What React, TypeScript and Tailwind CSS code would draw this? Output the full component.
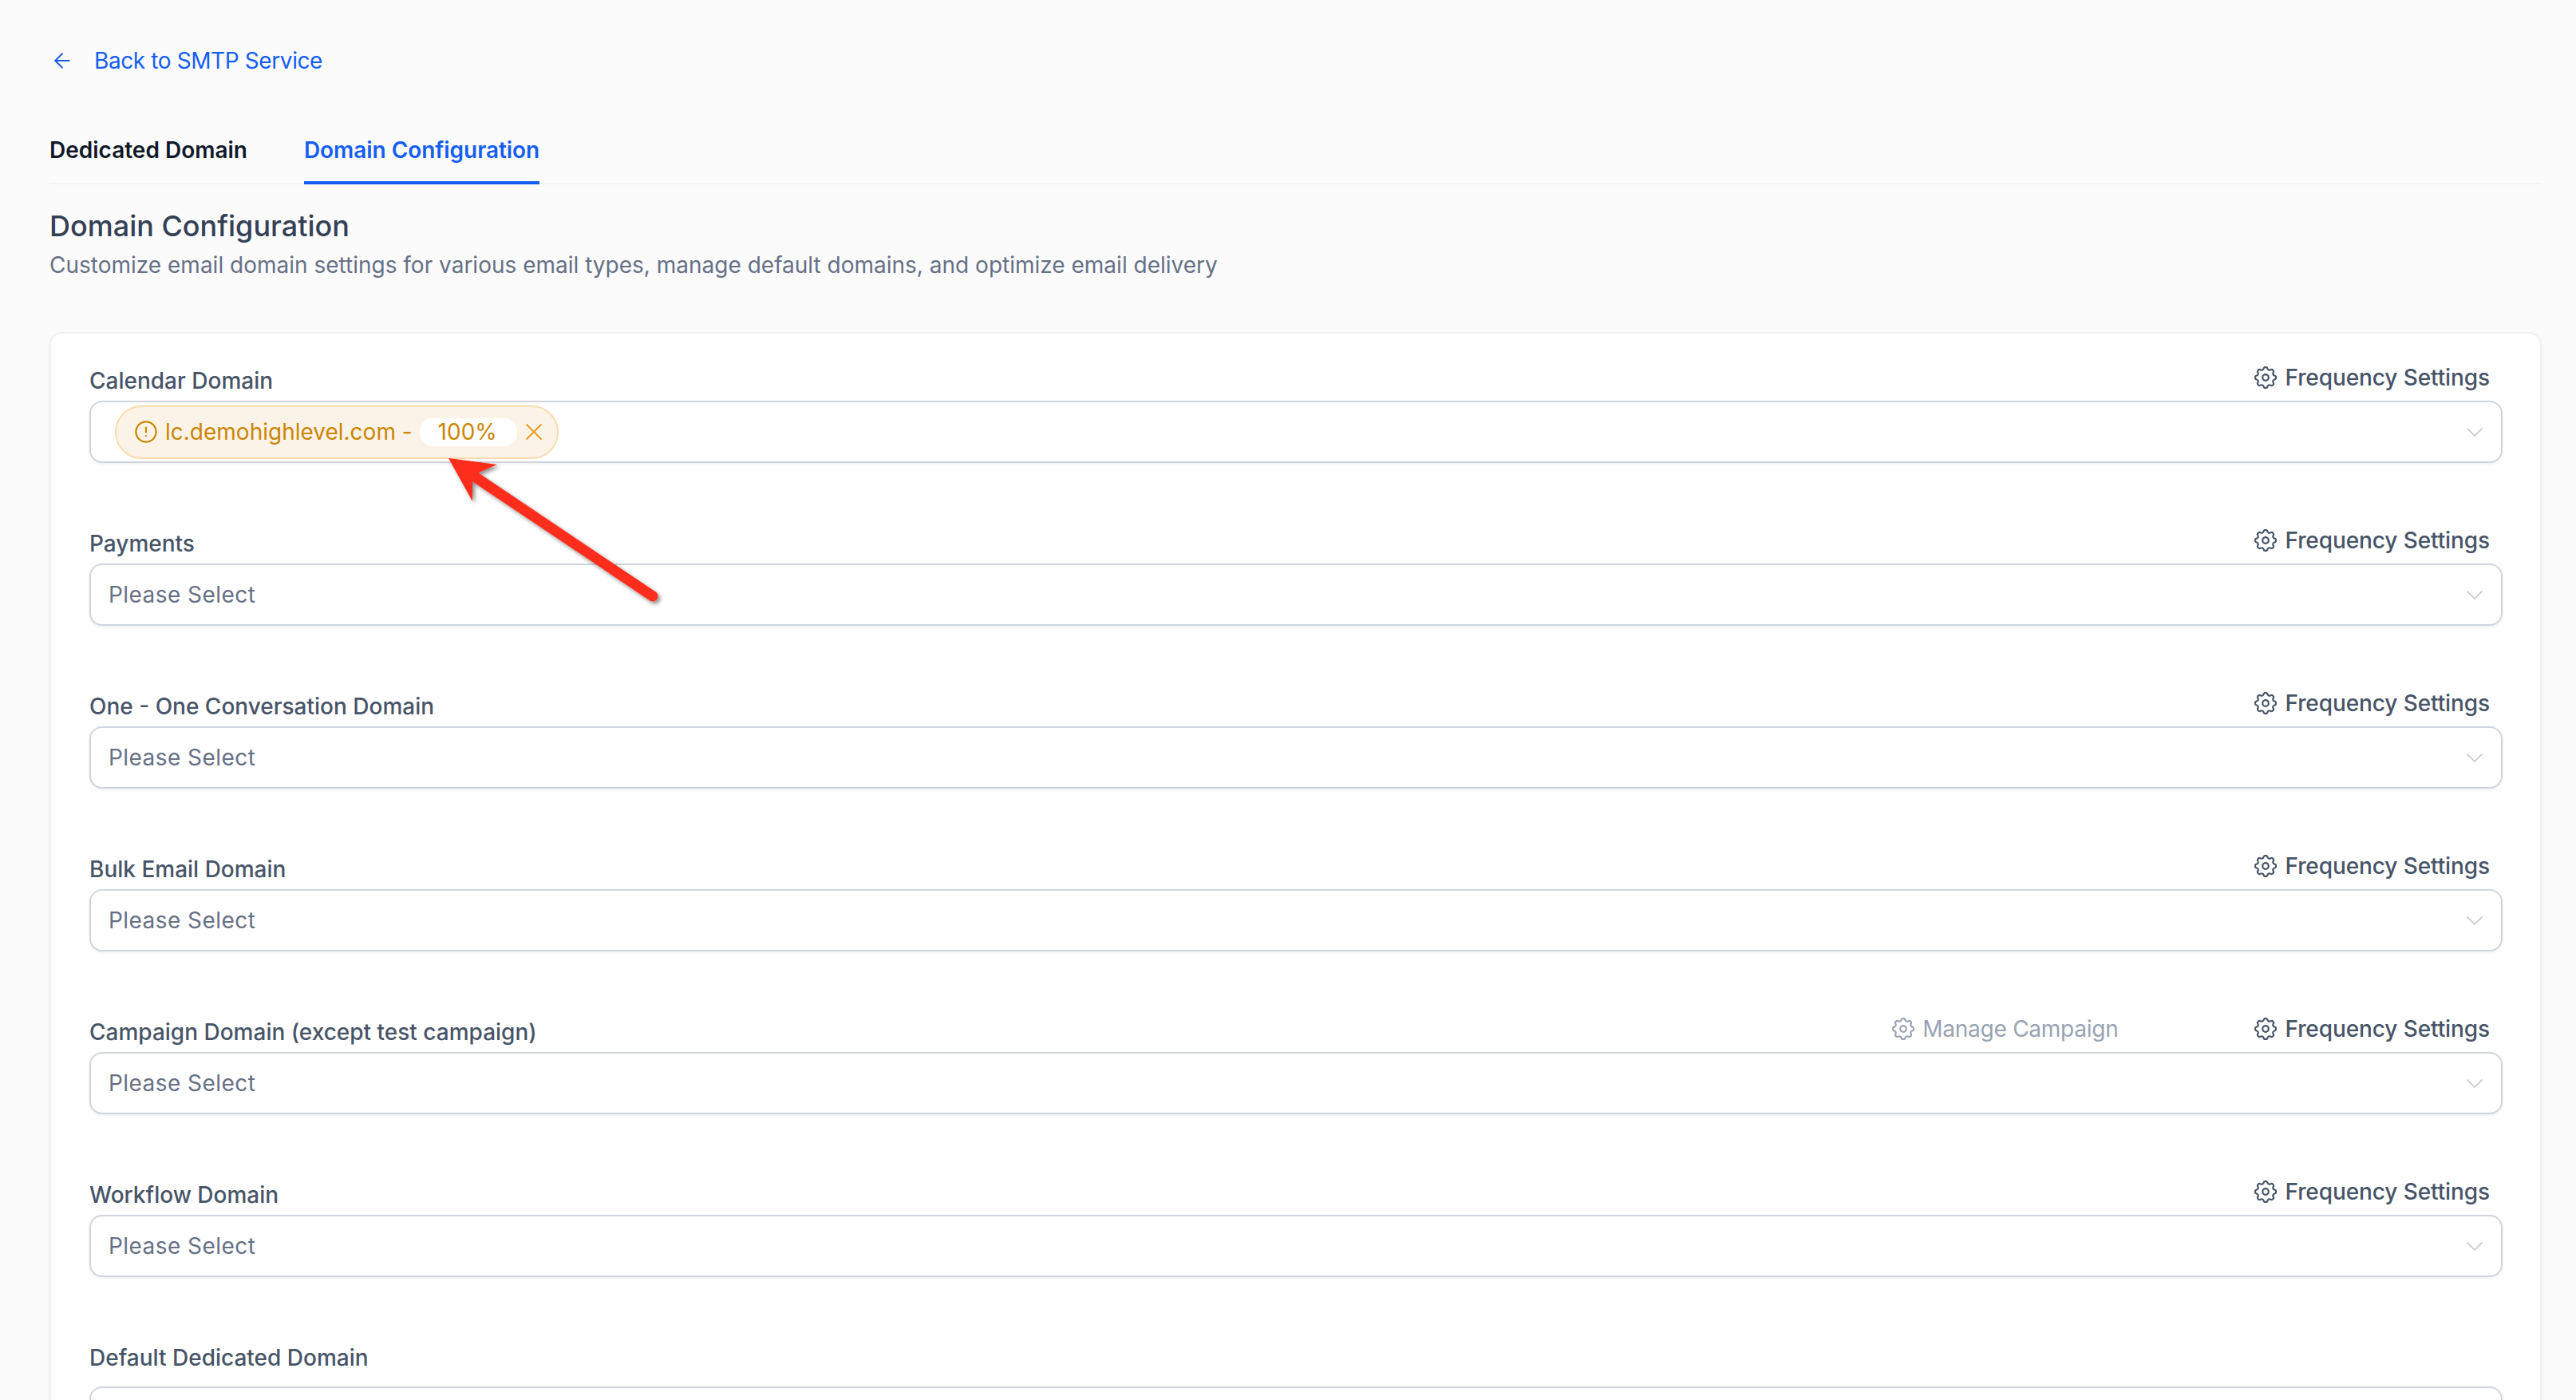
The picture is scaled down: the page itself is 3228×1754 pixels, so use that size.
import React from "react";
import { ArrowLeft, X } from "lucide-react";

function Gear({ className }: { className: string }) {
  return (
    <svg viewBox="2.4 2.4 19.2 19.2" className={className} fill="none" stroke="currentColor" strokeWidth="1.5" strokeLinecap="round" strokeLinejoin="round">
      <path d="M10.325 4.317c.426-1.756 2.924-1.756 3.35 0a1.724 1.724 0 002.573 1.066c1.543-.94 3.31.826 2.37 2.37a1.724 1.724 0 001.065 2.572c1.756.426 1.756 2.924 0 3.35a1.724 1.724 0 00-1.066 2.573c.94 1.543-.826 3.31-2.37 2.37a1.724 1.724 0 00-2.572 1.065c-.426 1.756-2.924 1.756-3.35 0a1.724 1.724 0 00-2.573-1.066c-1.543.94-3.31-.826-2.37-2.37a1.724 1.724 0 00-1.065-2.572c-1.756-.426-1.756-2.924 0-3.35a1.724 1.724 0 001.066-2.573c-.94-1.543.826-3.31 2.37-2.37.996.608 2.296.07 2.572-1.065z" />
      <circle cx="12" cy="12" r="2.6" />
    </svg>
  );
}

function Chevron() {
  return (
    <svg viewBox="0 0 20 11" className="h-[11px] w-[20px] shrink-0 text-[#c4c7cc]" fill="none" stroke="currentColor" strokeWidth="1.6">
      <path d="M0.6 0.6 L10 10 L19.4 0.6" />
    </svg>
  );
}

function Chip() {
  return (
    <div className="flex h-[67px] items-center rounded-full border-2 border-[#f9dbaf] bg-[#fcf3e8] pl-[23px] pr-[11px] text-[#ca8504]">
      <svg viewBox="0 0 28 28" className="h-[28px] w-[28px] shrink-0" fill="none" stroke="currentColor" strokeWidth="2.2" strokeLinecap="round">
        <circle cx="14" cy="14" r="12.6" />
        <path d="M14 8.5 V14.5" />
        <path d="M14 19 V19.2" />
      </svg>
      <span className="ml-[10px] whitespace-nowrap">lc.demohighlevel.com -</span>
      <span className="ml-[9px] flex h-[35px] w-[122px] items-center justify-center rounded-[16px] bg-white pr-[2px]">100%</span>
      <X className="ml-[3px] h-[36px] w-[36px] shrink-0 text-[#e89a1c]" strokeWidth={1.2} />
    </div>
  );
}

function Row({ label, chip, manage, plain }: { label: string; chip?: boolean; manage?: boolean; plain?: boolean }) {
  return (
    <div className="mb-[78px]">
      <div className={`flex items-end justify-between ${plain ? "h-[59px]" : "h-[48px]"}`}>
        <span className={`font-medium leading-[40px] text-[#475467] ${plain ? "pb-[16px]" : "pb-[5px]"}`}>{label}</span>
        {!plain && (
          <div className="flex items-end pb-[9px] pr-[16px] leading-[40px]">
            {manage && (
              <div className="mr-[171px] flex items-center gap-[10px] tracking-[-0.25px] text-[#98a2b3]">
                <Gear className="h-[28px] w-[28px]" />
                <span>Manage Campaign</span>
              </div>
            )}
            <div className="flex items-center gap-[10px] font-medium tracking-[-0.1px] text-[#475467]">
              <Gear className="h-[28px] w-[28px]" />
              <span>Frequency Settings</span>
            </div>
          </div>
        )}
      </div>
      <div className={`flex h-[78px] items-center justify-between rounded-[16px] border-2 border-[#d0d5dd] bg-white pr-[23px] shadow-[0_2px_4px_rgba(16,24,40,0.06)] ${chip ? "pl-[30px]" : "pl-[22px]"}`}>
        {chip ? <Chip /> : plain ? <span /> : <span className="tracking-[0.45px] text-[#667085]">Please Select</span>}
        <Chevron />
      </div>
    </div>
  );
}

export default function App() {
  return (
    <div className="relative h-[1754px] w-[3228px] overflow-hidden bg-[#fbfbfc] pl-[62px] pr-[43px] pt-[56px] text-[28px] leading-[40px] [font-family:Inter,'Liberation_Sans',sans-serif]">
      <div className="flex items-center text-[#155eef]">
        <ArrowLeft className="ml-[1px] h-[30px] w-[30px]" strokeWidth={1.5} />
        <span className="ml-[25px] tracking-[-0.4px]">Back to SMTP Service</span>
      </div>

      <div className="mt-[72px] flex h-[63px] gap-[71px] border-b-2 border-[#f2f4f7] font-semibold">
        <div className="text-[#101828]">Dedicated Domain</div>
        <div className="h-[63px] border-b-4 border-[#155eef] tracking-[-0.05px] text-[#155eef]">Domain Configuration</div>
      </div>

      <h1 className="mt-[28px] text-[36px] font-medium leading-[48px] text-[#344054]">Domain Configuration</h1>
      <p className="mt-[5px] text-[#667085]">
        Customize email domain settings for various email types, manage default domains, and optimize email delivery
      </p>

      <div className="mt-[64px] rounded-t-[16px] border-2 border-[#eff1f5] bg-white pb-[40px] pl-[48px] pr-[47px] pt-[36px] shadow-[0_2px_4px_rgba(16,24,40,0.05)]">
        <Row label="Calendar Domain" chip />
        <Row label="Payments" />
        <Row label="One - One Conversation Domain" />
        <Row label="Bulk Email Domain" />
        <Row label="Campaign Domain (except test campaign)" manage />
        <Row label="Workflow Domain" />
        <Row label="Default Dedicated Domain" plain />
      </div>

      <svg className="absolute left-0 top-0 h-[1754px] w-[3228px]" viewBox="0 0 3228 1754" fill="none">
        <defs>
          <filter id="arrowShadow" x="-20%" y="-20%" width="140%" height="140%">
            <feDropShadow dx="3" dy="3" stdDeviation="2.5" floodColor="#000000" floodOpacity="0.45" />
          </filter>
        </defs>
        <g filter="url(#arrowShadow)">
          <path d="M596 598 L818 747" stroke="#ff2d1c" strokeWidth="13" strokeLinecap="round" />
          <path d="M562 574 L623 582 L600 592 L592 603 L592 628 Z" fill="#ff2d1c" />
        </g>
      </svg>
    </div>
  );
}
